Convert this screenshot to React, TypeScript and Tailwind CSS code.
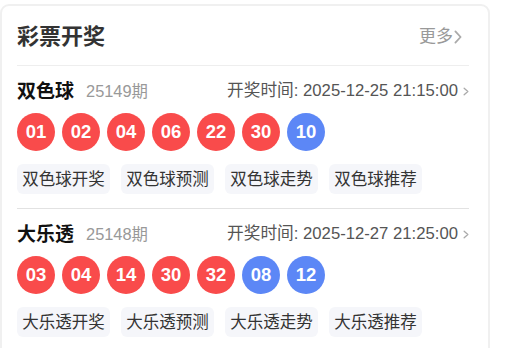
import React from "react";

const FONT = { fontFamily: '"Liberation Sans", Arial, "Noto Sans CJK SC", sans-serif' };

type Lottery = {
  name: string;
  issue: string;
  time: string;
  red: string[];
  blue: string[];
  tags: string[];
};

const data: Lottery[] = [
  {
    name: "双色球",
    issue: "25149期",
    time: "开奖时间: 2025-12-25 21:15:00",
    red: ["01", "02", "04", "06", "22", "30"],
    blue: ["10"],
    tags: ["双色球开奖", "双色球预测", "双色球走势", "双色球推荐"],
  },
  {
    name: "大乐透",
    issue: "25148期",
    time: "开奖时间: 2025-12-27 21:25:00",
    red: ["03", "04", "14", "30", "32"],
    blue: ["08", "12"],
    tags: ["大乐透开奖", "大乐透预测", "大乐透走势", "大乐透推荐"],
  },
];

function Chevron({ w, h, color, sw }: { w: number; h: number; color: string; sw: number }) {
  return (
    <svg width={w} height={h} viewBox={`0 0 ${w} ${h}`} fill="none">
      <path
        d={`M${sw / 2 + 0.5} ${sw / 2 + 0.5} L${w - sw / 2 - 0.5} ${h / 2} L${sw / 2 + 0.5} ${h - sw / 2 - 0.5}`}
        stroke={color}
        strokeWidth={sw}
        strokeLinecap="round"
        strokeLinejoin="round"
      />
    </svg>
  );
}

function Ball({ n, blue }: { n: string; blue?: boolean }) {
  return (
    <div
      className={`w-[38px] h-[38px] rounded-full flex items-center justify-center text-white font-bold text-[18.5px] ${
        blue ? "bg-[#5c87f6]" : "bg-[#f94b4b]"
      }`}
    >
      {n}
    </div>
  );
}

function Section({ d, last }: { d: Lottery; last?: boolean }) {
  return (
    <div className={`pt-[12px] pb-[14px] ${last ? "" : "border-b border-[#e2e2e2]"}`}>
      <div className="h-[26px] flex items-center justify-between">
        <div className="flex items-center">
          <span className="text-[19px] font-bold text-[#111] leading-none">{d.name}</span>
          <span className="ml-[12px] text-[16.4px] text-[#999] leading-none">{d.issue}</span>
        </div>
        <div className="flex items-center">
          <span className="text-[16.7px] text-[#555] leading-none">{d.time}</span>
          <span className="ml-[5px] mt-[1px]">
            <Chevron w={6} h={9} color="#aaa" sw={1.3} />
          </span>
        </div>
      </div>
      <div className="mt-[9px] flex gap-[7px]">
        {d.red.map((n, i) => (
          <Ball key={"r" + i} n={n} />
        ))}
        {d.blue.map((n, i) => (
          <Ball key={"b" + i} n={n} blue />
        ))}
      </div>
      <div className="mt-[13px] flex gap-[11px]">
        {d.tags.map((t) => (
          <div
            key={t}
            className="h-[30px] px-[5.25px] rounded-[6px] bg-[#f5f6fa] flex items-center text-[16.5px] text-[#333]"
          >
            {t}
          </div>
        ))}
      </div>
    </div>
  );
}

export default function App() {
  return (
    <div className="w-[517px] h-[348px] bg-white overflow-hidden" style={FONT}>
      <div className="mt-[4px] w-[490px] h-[400px] border-2 border-[#f0f0f0] rounded-[9px] bg-white pl-[15px] pr-[19px]">
        <div className="h-[60px] pt-[2px] flex items-center justify-between border-b border-[#eeeeee]">
          <span className="text-[22px] font-bold text-[#333] leading-none">彩票开奖</span>
          <div className="flex items-center mr-[7px]">
            <span className="text-[17px] text-[#999] leading-none">更多</span>
            <span className="ml-[1px] mt-[1px]">
              <Chevron w={8} h={14} color="#aaa" sw={1.8} />
            </span>
          </div>
        </div>
        {data.map((d, i) => (
          <Section key={d.name} d={d} last={i === data.length - 1} />
        ))}
      </div>
    </div>
  );
}
